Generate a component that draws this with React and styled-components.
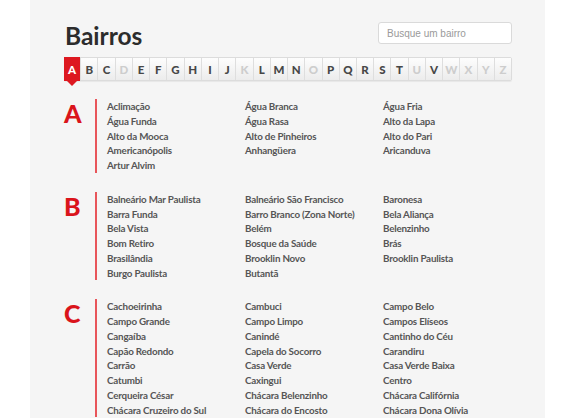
import React from "react";
import styled, {createGlobalStyle} from "styled-components";

const GlobalStyle = createGlobalStyle`
  html, body {
    margin: 0;
    padding: 0;
    background: #ffffff;
  }
  body {
    font-family: "Lato", "Open Sans", sans-serif;
  }
`;

const Page = styled.div`
  width: 515px;
  margin-left: 30px;
  min-height: 600px;
  padding: 22px 33px 0 35px;
  box-sizing: border-box;
  background: #f5f5f5;
`;

const Header = styled.header`
  display: flex;
  justify-content: space-between;
  align-items: flex-start;
  height: 35px;
`;

const Title = styled.h1`
  margin: 0;
  font-size: 24.5px;
  line-height: 24px;
  font-weight: 700;
  color: #2c2c2c;
  padding-top: 2px;
`;

const Search = styled.input`
  width: 134px;
  height: 22px;
  box-sizing: border-box;
  border: 1px solid #dadada;
  border-radius: 3px;
  background: #fff;
  padding: 0 8px;
  font-family: "Liberation Sans", Arial, sans-serif;
  font-size: 10px;
  color: #555;
  outline: none;
  &::placeholder {
    color: #9a9a9a;
  }
`;

const Alphabet = styled.nav`
  display: flex;
  margin-left: -1px;
  width: 448px;
  height: 24px;
  border: 1px solid #dcdcdc;
  border-radius: 2px;
  box-sizing: border-box;
  box-shadow: 0 1px 1px rgba(0, 0, 0, 0.06);
`;

const LetterBtn = styled.span`
  position: relative;
  flex: 1;
  display: flex;
  align-items: center;
  justify-content: center;
  font-size: 11.5px;
  font-weight: 900;
  color: ${(p) => (p.$active ? "#fff" : p.$off ? "#cdcdcd" : "#474747")};
  background: ${(p) =>
    p.$active ? "#dd1820" : "linear-gradient(#fdfdfd, #ececec)"};
  border-left: ${(p) => (p.$first ? "none" : "1px solid #dedede")};
  margin: ${(p) => (p.$active ? "-1px 0 -1px -1px" : "0")};
  &::after {
    content: "";
    display: ${(p) => (p.$active ? "block" : "none")};
    position: absolute;
    left: 50%;
    bottom: -5px;
    margin-left: -5px;
    border-left: 5px solid transparent;
    border-right: 5px solid transparent;
    border-top: 5px solid #dd1820;
  }
`;

const Sections = styled.div`
  margin-top: 18px;
  display: flex;
  flex-direction: column;
  gap: 19px;
`;

const Section = styled.section`
  display: flex;
`;

const Initial = styled.div`
  width: 31px;
  margin-left: -1px;
  flex: none;
  font-size: 25px;
  line-height: 25px;
  font-weight: 900;
  color: #da141b;
  padding-top: 2px;
`;

const List = styled.ul`
  margin: 0;
  padding: 0 0 0 10px;
  list-style: none;
  border-left: 2px solid #e8555a;
  display: grid;
  grid-template-columns: repeat(3, 138px);
`;

const Item = styled.li`
  font-size: 9.8px;
  letter-spacing: -0.2px;
  line-height: 14.75px;
  font-weight: 700;
  color: #565656;
  white-space: nowrap;
`;

const letters = "ABCDEFGHIJKLMNOPQRSTUVWXYZ".split("");
const disabled = ["D", "K", "O", "U", "W", "X", "Y", "Z"];

const bairros = {
  A: [
    "Aclimação", "Água Branca", "Água Fria",
    "Água Funda", "Água Rasa", "Alto da Lapa",
    "Alto da Mooca", "Alto de Pinheiros", "Alto do Pari",
    "Americanópolis", "Anhangüera", "Aricanduva",
    "Artur Alvim",
  ],
  B: [
    "Balneário Mar Paulista", "Balneário São Francisco", "Baronesa",
    "Barra Funda", "Barro Branco (Zona Norte)", "Bela Aliança",
    "Bela Vista", "Belém", "Belenzinho",
    "Bom Retiro", "Bosque da Saúde", "Brás",
    "Brasilândia", "Brooklin Novo", "Brooklin Paulista",
    "Burgo Paulista", "Butantã",
  ],
  C: [
    "Cachoeirinha", "Cambuci", "Campo Belo",
    "Campo Grande", "Campo Limpo", "Campos Elíseos",
    "Cangaíba", "Canindé", "Cantinho do Céu",
    "Capão Redondo", "Capela do Socorro", "Carandiru",
    "Carrão", "Casa Verde", "Casa Verde Baixa",
    "Catumbi", "Caxingui", "Centro",
    "Cerqueira César", "Chácara Belenzinho", "Chácara Califórnia",
    "Chácara Cruzeiro do Sul", "Chácara do Encosto", "Chácara Dona Olívia",
  ],
};

const App = () => {
  return (
    <>
      <GlobalStyle />
      <Page>
        <Header>
          <Title>Bairros</Title>
          <Search placeholder="Busque um bairro" />
        </Header>
        <Alphabet>
          {letters.map((l, i) => (
            <LetterBtn
              key={l}
              $first={i === 0}
              $active={l === "A"}
              $off={disabled.includes(l)}
            >
              {l}
            </LetterBtn>
          ))}
        </Alphabet>
        <Sections>
          {Object.keys(bairros).map((letter) => (
            <Section key={letter}>
              <Initial>{letter}</Initial>
              <List>
                {bairros[letter].map((name) => (
                  <Item key={name}>{name}</Item>
                ))}
              </List>
            </Section>
          ))}
        </Sections>
      </Page>
    </>
  );
};

export default App;
